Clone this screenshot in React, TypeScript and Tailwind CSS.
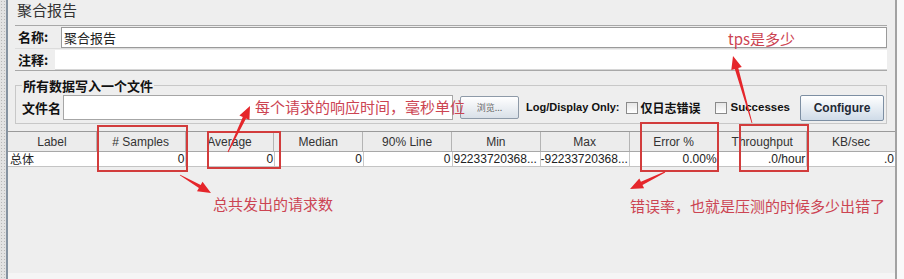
import React from 'react';

const SANS = "font-['Liberation_Sans','Noto_Sans_CJK_SC',sans-serif]";
const CJK = "font-['Noto_Sans_CJK_SC','Liberation_Sans',sans-serif]";

const columns = [
  'Label',
  '# Samples',
  'Average',
  'Median',
  '90% Line',
  'Min',
  'Max',
  'Error %',
  'Throughput',
  'KB/sec',
];

const totals = ['总体', '0', '0', '0', '0', '92233720368...', '-92233720368...', '0.00%', '.0/hour', '.0'];

// tapered red arrow, tail (x1,y1) -> head (x2,y2)
function arrowPoints(x1: number, y1: number, x2: number, y2: number) {
  const dx = x2 - x1;
  const dy = y2 - y1;
  const len = Math.sqrt(dx * dx + dy * dy);
  const ux = dx / len;
  const uy = dy / len;
  const nx = -uy;
  const ny = ux;
  const headLen = 13;
  const headW = 5.5;
  const shaftW = 1.8;
  const bx = x2 - ux * headLen;
  const by = y2 - uy * headLen;
  const pts = [
    [x1 + nx * 0.4, y1 + ny * 0.4],
    [bx + nx * shaftW, by + ny * shaftW],
    [bx + nx * headW, by + ny * headW],
    [x2, y2],
    [bx - nx * headW, by - ny * headW],
    [bx - nx * shaftW, by - ny * shaftW],
    [x1 - nx * 0.4, y1 - ny * 0.4],
  ];
  return pts.map((p) => p.map((v) => v.toFixed(1)).join(',')).join(' ');
}

const arrows = [
  [228, 152, 250, 106],
  [752, 123, 733, 56],
  [180, 175, 211, 193],
  [665, 172, 630, 189],
];

const Checkbox = () => (
  <span className="shrink-0 inline-block w-[12px] h-[12px] border border-[#8a8a8a] bg-gradient-to-b from-[#e6e6e6] to-white" />
);

export default function App() {
  return (
    <div className={`relative w-[904px] h-[279px] overflow-hidden bg-[#eeeeee] flex ${SANS}`}>
      {/* left dotted edge */}
      <div className="w-[6px] h-full bg-[#e2e2e2] bg-[radial-gradient(#b8b8b8_0.8px,transparent_0.8px)] bg-[length:3px_3px]" />
      <div className="w-[2px] h-full bg-[#8592a0]" />

      {/* main panel */}
      <div className="w-[887px] h-full flex flex-col">
        <div className={`pl-[9px] h-[20px] text-[15px] leading-[20px] text-[#333] ${CJK}`}>聚合报告</div>

        {/* name / comment */}
        <div className="mt-[5px] ml-[7px] mr-[8px] border-t border-b border-[#a8a8a8] bg-[#eeeeee]">
          <div className="flex h-[22px] items-center">
            <span className={`w-[46px] pl-[3px] text-[13px] leading-[18px] font-bold text-[#111] ${CJK}`}>名称:</span>
            <div className={`flex-1 h-[21px] border border-[#9a9a9a] bg-white pl-[2px] text-[13px] leading-[19px] text-[#222] ${CJK}`}>
              聚合报告
            </div>
          </div>
          <div className="flex h-[22px] items-center border-t border-[#dcdcdc]">
            <span className={`w-[40px] pl-[3px] text-[13px] leading-[18px] font-bold text-[#111] ${CJK}`}>注释:</span>
            <div className="flex-1 h-[20px] bg-white border-b border-[#d6d6d6]" />
          </div>
        </div>

        {/* write to file */}
        <fieldset className="mt-[7px] ml-[7px] mr-[8px] border border-[#c8c8c8] pl-[6px] pr-[2px] pt-[1px] pb-[2px]">
          <legend className={`px-[1px] text-[13px] leading-[15px] font-bold text-[#111] ${CJK}`}>所有数据写入一个文件</legend>
          <div className="flex items-center h-[27px] whitespace-nowrap">
            <span className={`shrink-0 w-[41px] text-[13px] leading-[18px] font-bold text-[#111] ${CJK}`}>文件名</span>
            <div className="shrink-0 w-[390px] h-[25px] border border-[#a6a6a6] bg-white" />
            <button className={`shrink-0 ml-[7px] w-[59px] h-[23px] border border-[#8e9aa8] rounded-[2px] bg-gradient-to-b from-white to-[#d9e0e8] text-[9px] text-[#666] ${CJK}`}>
              浏览...
            </button>
            <span className="shrink-0 ml-[7px] text-[11px] font-bold text-[#111]">Log/Display Only:</span>
            <span className="shrink-0 ml-[6px] flex items-center">
              <Checkbox />
            </span>
            <span className={`shrink-0 ml-[3px] text-[12px] leading-[16px] font-bold text-[#111] ${CJK}`}>仅日志错误</span>
            <span className="shrink-0 ml-[14px] flex items-center">
              <Checkbox />
            </span>
            <span className="shrink-0 ml-[4px] text-[11.5px] font-bold text-[#111]">Successes</span>
            <span className="flex-1" />
            <button className="shrink-0 w-[84px] h-[26px] border border-[#7d8fa3] rounded-[2px] bg-gradient-to-b from-white to-[#cfdbe8] text-[12px] font-bold text-[#1f2a36]">
              Configure
            </button>
          </div>
        </fieldset>

        {/* results table */}
        <div className="mt-[7px] border-t border-[#9a9a9a]">
          <div className="flex h-[20px] bg-[#ececec] border-b border-[#a8a8a8]">
            {columns.map((c, i) => (
              <div
                key={c}
                className={`flex-1 flex items-center justify-center text-[12px] text-[#333] ${i < columns.length - 1 ? 'border-r border-[#b4b4b4]' : ''}`}
              >
                {c}
              </div>
            ))}
          </div>
          <div className="flex h-[15px] bg-white border-b border-[#c4c4c4]">
            {totals.map((v, i) => (
              <div
                key={i}
                className={`flex-1 min-w-0 flex items-center whitespace-nowrap text-[12px] leading-[14px] text-[#222] ${
                  i === 0 ? `justify-start pl-[2px] ${CJK}` : i === 5 ? 'justify-start pl-[1px] overflow-hidden' : 'justify-end pr-[1px] overflow-hidden'
                } ${i < totals.length - 1 ? 'border-r border-[#c8c8c8]' : ''}`}
              >
                {v}
              </div>
            ))}
          </div>
        </div>

        <div className="flex-1" />
        <div className="h-[6px] bg-[#f5f5f5]" />
      </div>

      {/* right edge */}
      <div className="w-[2px] h-full bg-[#a2a2a2]" />
      <div className="flex-1 h-full bg-[#f9f9f9]" />

      {/* annotations */}
      <div className="absolute left-[97px] top-[125px] w-[91px] h-[47px] border-2 border-[#d23c3c]" />
      <div className="absolute left-[207px] top-[131px] w-[74px] h-[38px] border-2 border-[#d23c3c]" />
      <div className="absolute left-[640px] top-[122px] w-[79px] h-[50px] border-2 border-[#d23c3c]" />
      <div className="absolute left-[739px] top-[124px] w-[70px] h-[48px] border-2 border-[#d23c3c]" />

      <span className={`absolute left-[255px] top-[97px] text-[15px] leading-[20px] text-[#cc4452] ${CJK}`}>
        每个请求的响应时间，毫秒单位
      </span>
      <span className={`absolute left-[728px] top-[29px] text-[15px] leading-[20px] text-[#cc4452] ${CJK}`}>tps是多少</span>
      <span className={`absolute left-[213px] top-[194px] text-[15px] leading-[20px] text-[#cc4452] ${CJK}`}>
        总共发出的请求数
      </span>
      <span className={`absolute left-[630px] top-[196px] text-[15px] leading-[20px] text-[#cc4452] ${CJK}`}>
        错误率，也就是压测的时候多少出错了
      </span>

      <svg className="absolute left-0 top-0 pointer-events-none" width={904} height={279}>
        {arrows.map(([x1, y1, x2, y2], i) => (
          <polygon key={i} points={arrowPoints(x1, y1, x2, y2)} fill="#e5262b" />
        ))}
      </svg>
    </div>
  );
}
